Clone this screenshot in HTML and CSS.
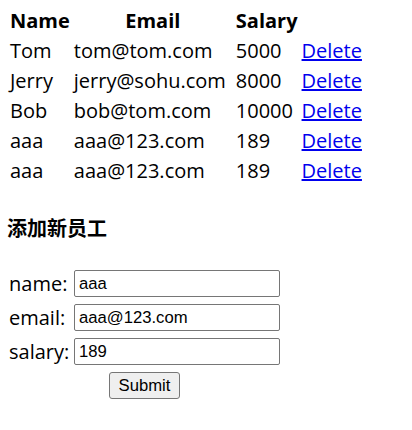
FILE: index.html
```html
<!DOCTYPE html>
<html>
<head>
<meta charset="utf-8">
<link rel="stylesheet" href="styles.css">
</head>
<body>
<table class="emp">
  <thead>
    <tr><th class="c-name">Name</th><th class="c-email">Email</th><th class="c-sal">Salary</th><th></th></tr>
  </thead>
  <tbody>
    <tr><td>Tom</td><td>tom@tom.com</td><td>5000</td><td><a href="#">Delete</a></td></tr>
    <tr><td>Jerry</td><td>jerry@sohu.com</td><td>8000</td><td><a href="#">Delete</a></td></tr>
    <tr><td>Bob</td><td>bob@tom.com</td><td>10000</td><td><a href="#">Delete</a></td></tr>
    <tr><td>aaa</td><td>aaa@123.com</td><td>189</td><td><a href="#">Delete</a></td></tr>
    <tr><td>aaa</td><td>aaa@123.com</td><td>189</td><td><a href="#">Delete</a></td></tr>
  </tbody>
</table>
<h4 class="title">添加新员工</h4>
<form class="add-form">
  <div class="row"><label class="lbl">name:</label><input class="field" type="text" value="aaa"></div>
  <div class="row"><label class="lbl">email:</label><input class="field" type="text" value="aaa@123.com"></div>
  <div class="row"><label class="lbl">salary:</label><input class="field" type="text" value="189"></div>
  <div class="submit-row"><button class="btn" type="button">Submit</button></div>
</form>
</body>
</html>
```
FILE: styles.css
```css
html, body { background: #fff; }
body {
  margin: 0;
  padding: 5px 8px 0 7px;
  font-family: "Open Sans", "Noto Sans", sans-serif;
  font-size: 20px;
  color: #000;
}
.emp {
  border-collapse: separate;
  border-spacing: 2px;
}
.emp th, .emp td {
  padding: 1px;
  line-height: 26px;
  white-space: nowrap;
}
.emp th { font-weight: bold; text-align: center; }
.emp td { text-align: left; }
.c-name { width: 59px; }
.c-email { width: 158px; }
.c-sal { width: 60px; }
.emp a { color: #0000ee; text-decoration: underline; }
.title {
  margin: 28px 0 0 0;
  font-family: "Noto Sans CJK SC", sans-serif;
  font-size: 20px;
  font-weight: bold;
  line-height: 26px;
}
.add-form {
  margin-top: 29px;
  display: flex;
  flex-direction: column;
  gap: 7px;
  width: 273px;
}
.row {
  display: flex;
  align-items: center;
  height: 27px;
}
.lbl {
  width: 65px;
  padding-left: 2px;
  line-height: 27px;
}
.field {
  box-sizing: border-box;
  width: 206px;
  height: 27px;
  margin: 0;
  padding: 0 4px;
  border: 1px solid #767676;
  border-radius: 2px;
  font-family: "Liberation Sans", Arial, sans-serif;
  font-size: 16.67px;
  color: #000;
}
.submit-row {
  display: flex;
  justify-content: center;
  padding-left: 2px;
}
.btn {
  box-sizing: border-box;
  width: 71px;
  height: 27px;
  padding: 0;
  background: #efefef;
  border: 1px solid #767676;
  border-radius: 3px;
  font-family: "Liberation Sans", Arial, sans-serif;
  font-size: 16.67px;
  color: #000;
}
```
